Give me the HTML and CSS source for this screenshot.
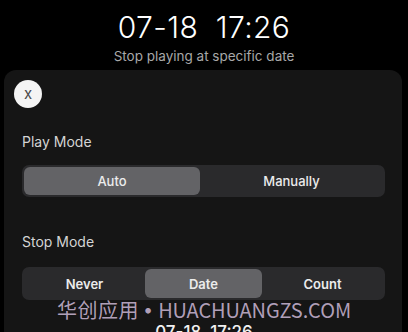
FILE: index.html
```html
<!DOCTYPE html>
<html>
<head>
<meta charset="utf-8">
<link rel="stylesheet" href="styles.css">
</head>
<body>
<div class="page">
  <header class="head">
    <div class="time">07-18&nbsp;&nbsp;17:26</div>
    <div class="sub">Stop playing at specific date</div>
  </header>
  <section class="card">
    <div class="close">x</div>
    <div class="label play">Play Mode</div>
    <div class="seg two">
      <div class="opt on">Auto</div>
      <div class="opt">Manually</div>
    </div>
    <div class="label stop">Stop Mode</div>
    <div class="seg three">
      <div class="opt">Never</div>
      <div class="opt on">Date</div>
      <div class="opt">Count</div>
    </div>
  </section>
  <div class="mark"><span class="cjk">华创应用</span><span class="dot">•</span><span class="lat">HUACHUANGZS.COM</span></div>
  <div class="ghost">07-18&nbsp;&nbsp;17:26</div>
</div>
</body>
</html>
```
FILE: styles.css
```css
html, body {
  margin: 0;
  padding: 0;
  background: #000;
}
.page {
  position: relative;
  width: 408px;
  height: 332px;
  overflow: hidden;
  font-family: Inter, "Noto Sans", sans-serif;
  color: #fff;
}
.head {
  display: flex;
  flex-direction: column;
  align-items: center;
  padding-top: 9px;
  height: 62px;
  box-sizing: border-box;
}
.time {
  font-size: 30px;
  font-weight: 300;
  line-height: 36px;
  letter-spacing: 0.4px;
}
.sub {
  font-size: 13.5px;
  line-height: 16px;
  color: #a8a8a8;
  margin-top: 3px;
}
.card {
  margin: 8px 6px 0 4px;
  background: #151515;
  border-radius: 12px;
  padding: 10px 17px 40px 18px;
  height: 300px;
  box-sizing: border-box;
  display: flex;
  flex-direction: column;
}
.close {
  width: 28px;
  height: 28px;
  border-radius: 50%;
  background: #f4f4f4;
  color: #4a4a4a;
  display: flex;
  align-items: center;
  justify-content: center;
  font-size: 15px;
  line-height: 1;
  padding-bottom: 2px;
  box-sizing: border-box;
  margin-left: -8px;
}
.label {
  font-size: 14px;
  line-height: 18px;
  color: #d4d4d4;
}
.play { margin-top: 25px; }
.stop { margin-top: 36px; }
.seg {
  display: flex;
  background: #2a2a2c;
  border-radius: 7px;
  padding: 2px;
  height: 32px;
  box-sizing: border-box;
  margin-top: 14px;
}
.seg.three { height: 33px; margin-top: 16px; }
.opt {
  display: flex;
  align-items: center;
  justify-content: center;
  font-size: 13px;
  font-weight: 500;
  color: #ececec;
  border-radius: 6px;
}
.two .opt { flex: none; width: 176px; }
.two .opt + .opt { flex: 1; }
.opt.on { background: #636366; }
.three .opt { flex: none; width: 121px; font-weight: 600; }
.three .opt.on { width: 117px; }
.three .opt:last-child { flex: 1; }
.mark {
  position: absolute;
  left: 57px;
  top: 299px;
  display: flex;
  align-items: center;
  font-family: "Noto Sans CJK SC", "Noto Sans", sans-serif;
  font-size: 20px;
  line-height: 22px;
  color: rgba(205, 185, 215, 0.85);
  white-space: nowrap;
}
.cjk { letter-spacing: 0.5px; }
.dot { font-family: Inter, sans-serif; font-size: 18px; margin: 0 5px 0 4px; }
.lat { letter-spacing: -0.1px; }
.ghost {
  position: absolute;
  left: 0;
  right: 0;
  top: 322px;
  text-align: center;
  font-size: 17px;
  line-height: 20px;
  font-weight: 500;
  color: #f0f0f0;
}
```
